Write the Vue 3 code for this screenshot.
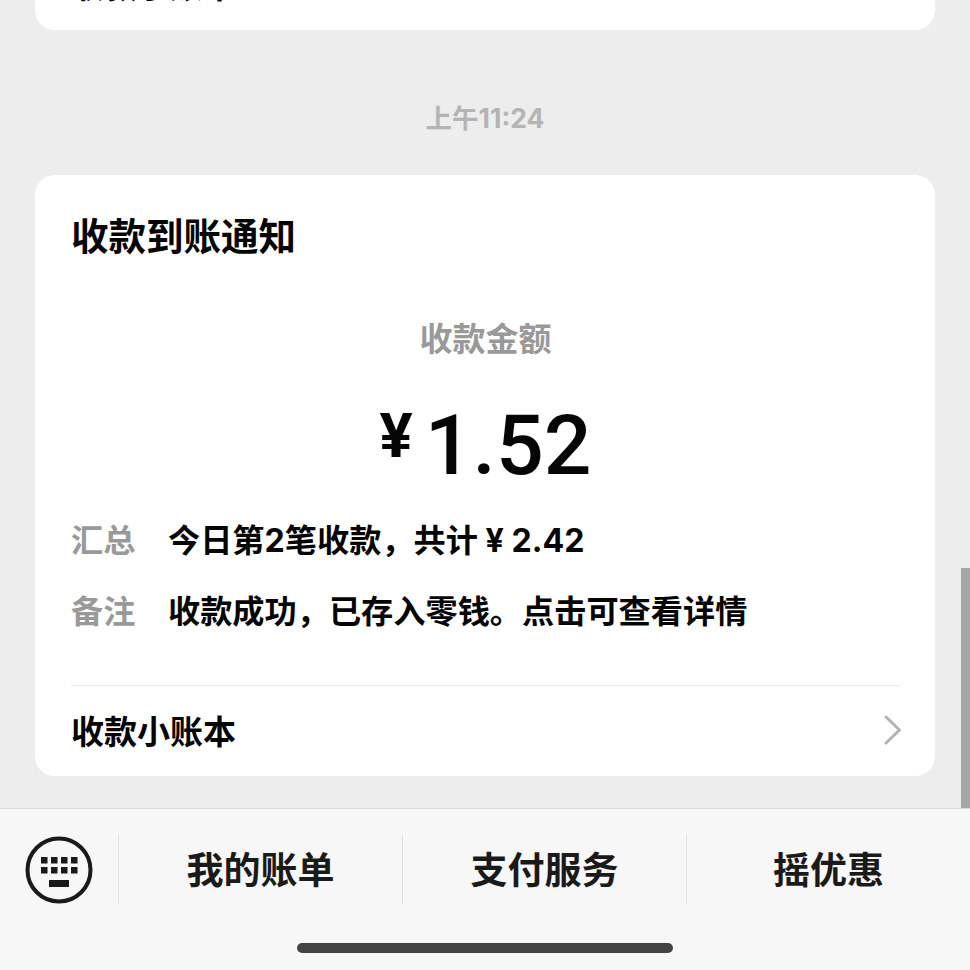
<script setup>
const rows = [
  { label: '汇总', value: '今日第2笔收款，共计 ¥ 2.42' },
  { label: '备注', value: '收款成功，已存入零钱。点击可查看详情' },
]
const tabs = ['我的账单', '支付服务', '摇优惠']
</script>

<template>
  <div class="page">
    <div class="chat">
      <div class="card prev">
        <div class="prev-text">收款小账本</div>
      </div>
      <div class="time">上午11:24</div>
      <div class="card notice">
        <div class="title">收款到账通知</div>
        <div class="amount-label">收款金额</div>
        <div class="amount"><span class="yen">¥</span><span>1.52</span></div>
        <div class="rows">
          <div v-for="row in rows" :key="row.label" class="row">
            <span class="row-label">{{ row.label }}</span>
            <span class="row-value">{{ row.value }}</span>
          </div>
        </div>
        <div class="foot">
          <span>收款小账本</span>
          <svg class="chevron" width="18" height="30" viewBox="0 0 18 30" fill="none">
            <path d="M2 2 L15.5 15 L2 28" stroke="#b2b2b2" stroke-width="3" stroke-linecap="round" stroke-linejoin="round" />
          </svg>
        </div>
      </div>
      <div class="scrollbar"></div>
    </div>
    <div class="bar">
      <div class="menu">
        <div class="kb">
          <svg width="68" height="68" viewBox="0 0 68 68" fill="none">
            <circle cx="34" cy="34" r="31.5" stroke="#1a1a1a" stroke-width="4" />
            <g fill="#1a1a1a">
              <rect x="16" y="21" width="6.5" height="6.5" />
              <rect x="26" y="21" width="6.5" height="6.5" />
              <rect x="36" y="21" width="6.5" height="6.5" />
              <rect x="46" y="21" width="6.5" height="6.5" />
              <rect x="16" y="31" width="6.5" height="6.5" />
              <rect x="26" y="31" width="6.5" height="6.5" />
              <rect x="36" y="31" width="6.5" height="6.5" />
              <rect x="46" y="31" width="6.5" height="6.5" />
              <rect x="24" y="44" width="20" height="7" />
            </g>
          </svg>
        </div>
        <div v-for="tab in tabs" :key="tab" class="tab">{{ tab }}</div>
      </div>
      <div class="home"></div>
    </div>
  </div>
</template>

<style scoped>
.page {
  width: 970px;
  height: 970px;
  overflow: hidden;
  display: flex;
  flex-direction: column;
  background: #ededed;
  font-family: "Noto Sans CJK SC", "Liberation Sans", sans-serif;
  color: #050505;
}

.chat {
  position: relative;
  height: 808px;
  padding: 0 35px;
  box-sizing: border-box;
}

.card {
  background: #fff;
  border-radius: 20px;
}

.prev {
  height: 30px;
  border-radius: 0 0 20px 20px;
  overflow: hidden;
}

.prev-text {
  margin: -38px 0 0 36px;
  font-size: 33px;
  line-height: 44px;
  font-weight: 700;
}

.time {
  height: 145px;
  padding-top: 71px;
  box-sizing: border-box;
  text-align: center;
  font-family: Inter, "Noto Sans CJK SC", sans-serif;
  font-size: 26.5px;
  line-height: 34px;
  font-weight: 700;
  color: #b4b4b4;
}

.notice {
  height: 601px;
  padding: 0 35px 0 36px;
  box-sizing: border-box;
  display: flex;
  flex-direction: column;
}

.title {
  margin-top: 33px;
  font-size: 37.5px;
  line-height: 52px;
  font-weight: 700;
}

.amount-label {
  margin-top: 55px;
  text-align: center;
  font-size: 33px;
  line-height: 44px;
  font-weight: 700;
  color: #999;
}

.amount {
  margin-top: 39px;
  display: flex;
  justify-content: center;
  align-items: flex-start;
  gap: 12px;
  height: 96px;
  font-family: Roboto, "Liberation Sans", sans-serif;
  font-size: 84px;
  line-height: 96px;
  font-weight: 500;
}

.yen {
  margin-top: 8px;
  font-size: 62px;
  font-weight: 700;
  line-height: 60px;
}

.rows {
  margin-top: 25px;
  display: flex;
  flex-direction: column;
  gap: 27px;
}

.row {
  display: flex;
  font-family: Inter, "Noto Sans CJK SC", sans-serif;
  font-size: 32.2px;
  line-height: 44px;
  font-weight: 700;
}

.row-label {
  width: 97px;
  flex: none;
  color: #999;
}

.foot {
  margin-top: auto;
  height: 91px;
  padding-bottom: 3px;
  box-sizing: border-box;
  border-top: 1px solid #ededed;
  display: flex;
  align-items: center;
  justify-content: space-between;
  font-size: 33px;
  font-weight: 700;
}

.chevron {
  margin-right: -2px;
}

.scrollbar {
  position: absolute;
  right: 0;
  top: 568px;
  width: 9px;
  height: 240px;
  background: #a5a5a5;
}

.bar {
  flex: 1;
  background: #f7f7f7;
  border-top: 1px solid #d8d8d8;
  display: flex;
  flex-direction: column;
  align-items: center;
}

.menu {
  width: 100%;
  margin-top: 25px;
  height: 71px;
  display: flex;
}

.kb {
  width: 118px;
  flex: none;
  display: flex;
  align-items: center;
  justify-content: center;
}

.tab {
  flex: 1;
  border-left: 1px solid #e2e2e2;
  display: flex;
  align-items: center;
  justify-content: center;
  padding-bottom: 3px;
  box-sizing: border-box;
  font-size: 37px;
  font-weight: 700;
  color: #1a1a1a;
}

.home {
  margin-top: 38px;
  width: 376px;
  height: 10px;
  border-radius: 5px;
  background: #444;
}
</style>
